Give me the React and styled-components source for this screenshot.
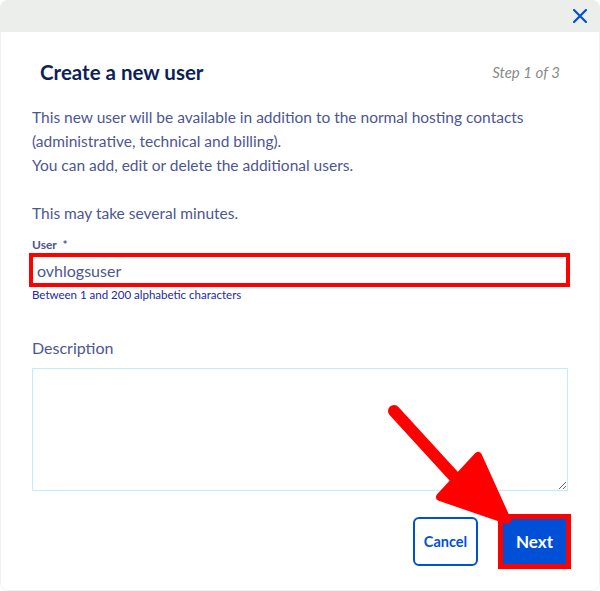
import React from "react";
import styled, { createGlobalStyle } from "styled-components";

const Global = createGlobalStyle`
  html, body { margin: 0; padding: 0; background: #ffffff; }
  body { font-family: "Lato", "Open Sans", sans-serif; }
  * { box-sizing: border-box; }
`;

const Modal = styled.div`
  position: relative;
  width: 600px;
  height: 591px;
  border-radius: 8px;
  box-shadow: inset 0 0 0 1px #f1f1f1;
  overflow: hidden;
  background: #fff;
  display: flex;
  flex-direction: column;
`;

const Header = styled.div`
  height: 32px;
  background: #eceeec;
  display: flex;
  align-items: center;
  justify-content: flex-end;
  padding-right: 12px;
`;

const CloseButton = styled.button`
  border: none;
  background: transparent;
  padding: 0;
  width: 16px;
  height: 16px;
  display: flex;
  align-items: center;
  justify-content: center;
  cursor: pointer;
`;

const Body = styled.div`
  padding: 0 32px;
  display: flex;
  flex-direction: column;
`;

const TitleRow = styled.div`
  margin-top: 26px;
  padding: 0 8px 0 8px;
  display: flex;
  align-items: center;
  justify-content: space-between;
  height: 28px;
`;

const Title = styled.h2`
  margin: 0;
  font-size: 20.5px;
  font-weight: 700;
  color: #0c1f5b;
`;

const Step = styled.span`
  font-size: 15px;
  font-style: italic;
  color: #8a8a8a;
`;

const Paragraph = styled.p`
  margin: 19px 0 0;
  font-size: 15.5px;
  line-height: 24px;
  color: #4d5693;
`;

const Label = styled.label`
  display: block;
  margin-top: ${(p) => p.$top}px;
  font-size: ${(p) => (p.$small ? 12 : 16)}px;
  font-weight: ${(p) => (p.$small ? 700 : 400)};
  line-height: ${(p) => (p.$small ? 16 : 24)}px;
  color: #4d5693;
`;

const Input = styled.input`
  display: block;
  margin-left: -3px;
  width: 541px;
  height: 34px;
  border: 4px solid ${(p) => (p.$highlight ? "#ff0000" : "#bdf0fa")};
  padding: 0 4px;
  font-family: inherit;
  font-size: 16px;
  color: #4d5693;
  outline: none;
  background: #fff;
`;

const Help = styled.div`
  margin-top: 1px;
  font-size: 11.5px;
  line-height: 14px;
  color: #2228a6;
`;

const TextArea = styled.textarea`
  display: block;
  margin-top: 8px;
  width: 536px;
  height: 123px;
  border: 1px solid #bdeefa;
  font-family: inherit;
  font-size: 16px;
  outline: none;
  resize: both;
`;

const Actions = styled.div`
  margin-top: 23px;
  margin-right: -3px;
  display: flex;
  justify-content: flex-end;
  align-items: center;
  gap: 20px;
`;

const Button = styled.button`
  font-family: inherit;
  font-weight: 700;
  cursor: pointer;
  display: flex;
  align-items: center;
  justify-content: center;
  ${(p) =>
    p.$primary
      ? `
    width: 73px;
    height: 55px;
    background: #0050d7;
    border: 5px solid #ff0000;
    color: #fff;
    font-size: 17px;
  `
      : `
    width: 65px;
    height: 49px;
    background: #fff;
    border: 2px solid #0050d7;
    border-radius: 6px;
    color: #0050d7;
    font-size: 14.5px;
  `}
`;

const Annotation = styled.svg`
  position: absolute;
  left: 0;
  top: 0;
  pointer-events: none;
`;

export default function App() {
  return (
    <>
      <Global />
      <Modal>
        <Header>
          <CloseButton aria-label="Close">
            <svg width="14" height="14" viewBox="0 0 14 14">
              <path d="M1 1 L13 13 M13 1 L1 13" stroke="#0050d7" strokeWidth="2.2" strokeLinecap="square" />
            </svg>
          </CloseButton>
        </Header>
        <Body>
          <TitleRow>
            <Title>Create a new user</Title>
            <Step>Step 1 of 3</Step>
          </TitleRow>
          <Paragraph>
            This new user will be available in addition to the normal hosting contacts
            (administrative, technical and billing).
            <br />
            You can add, edit or delete the additional users.
            <br />
            <br />
            This may take several minutes.
          </Paragraph>
          <Label $small $top={12}>User&nbsp; *</Label>
          <Input $highlight defaultValue="ovhlogsuser" />
          <Help>Between 1 and 200 alphabetic characters</Help>
          <Label $top={34}>Description</Label>
          <TextArea />
          <Actions>
            <Button>Cancel</Button>
            <Button $primary>Next</Button>
          </Actions>
        </Body>
        <Annotation width="600" height="591" viewBox="0 0 600 591">
          <line x1="394" y1="411" x2="470" y2="494" stroke="#ff0000" strokeWidth="12" strokeLinecap="round" />
          <path
            d="M478 456 L507 520 L440 497 Z"
            fill="#ff0000"
            stroke="#ff0000"
            strokeWidth="8"
            strokeLinejoin="round"
          />
        </Annotation>
      </Modal>
    </>
  );
}
